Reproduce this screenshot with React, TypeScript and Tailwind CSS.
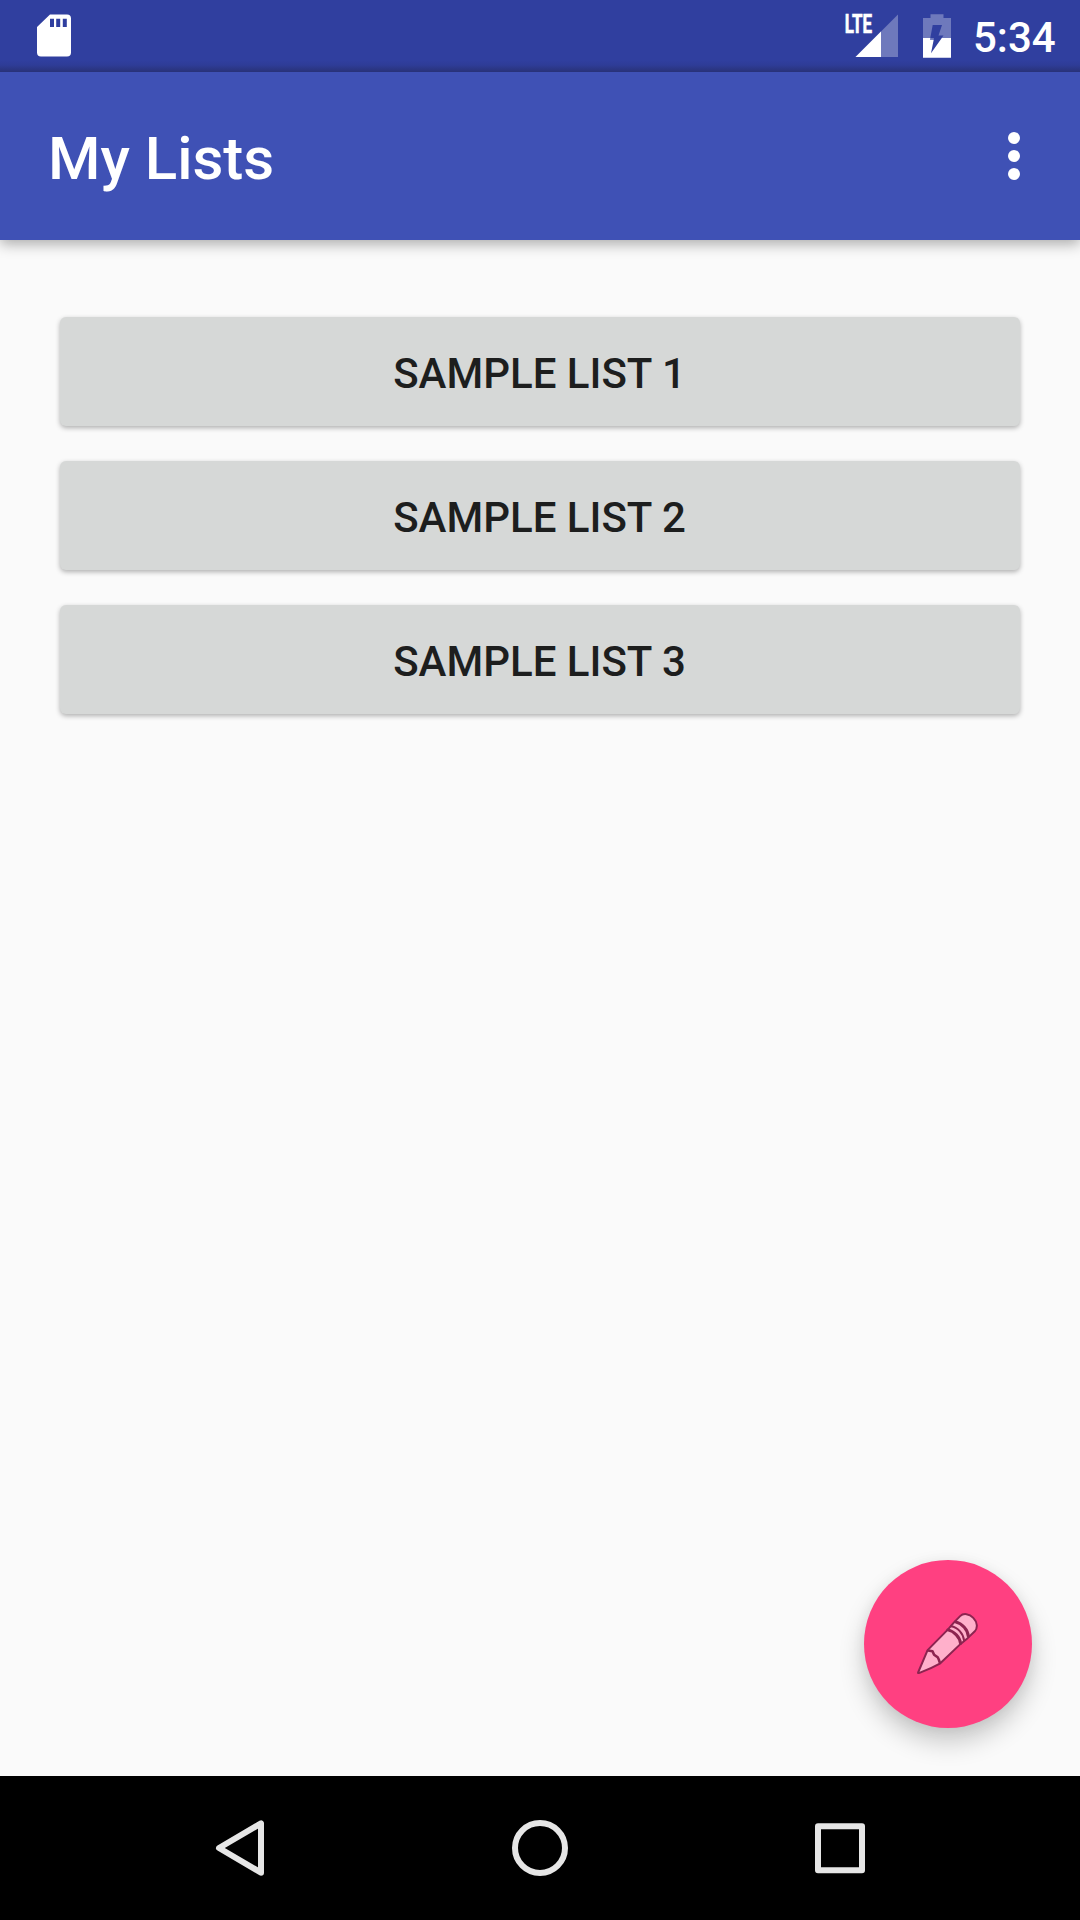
const LISTS = ["Sample List 1", "Sample List 2", "Sample List 3"];

function SdCardIcon() {
  return (
    <svg width="34" height="43" viewBox="0 0 34 43" className="shrink-0">
      <path
        fill="#fff"
        fillRule="evenodd"
        d="M13 .5H30a4 4 0 0 1 4 4V38.5a4 4 0 0 1-4 4H4a4 4 0 0 1-4-4V13ZM13 4.7V13h4V4.7ZM19.2 4.7V13h4V4.7ZM25.8 4.7V13h4V4.7Z"
      />
    </svg>
  );
}

function SignalIcon() {
  return (
    <svg width="61" height="52" viewBox="838 6 61 52" className="-mt-2 shrink-0">
      <path d="M898 14.5V57H855.5Z" fill="#fff" fillOpacity=".3" />
      <path d="M881 31.5V57H855.5Z" fill="#fff" />
      <text
        x="844.7"
        y="33.4"
        fill="#fff"
        stroke="#fff"
        strokeWidth=".6"
        fontFamily="Roboto"
        fontWeight="700"
        fontSize="25.5"
        textLength="27.4"
        lengthAdjust="spacingAndGlyphs"
      >
        LTE
      </text>
    </svg>
  );
}

function BatteryIcon() {
  return (
    <svg width="28" height="44" viewBox="923 14 28 44" className="shrink-0">
      <path
        fill="#fff"
        fillOpacity=".3"
        fillRule="evenodd"
        d="M930.5 14.2H943.5V18H951V38H941.6L943.5 35.6H938.5L942 25H932.7L930 39.6H933.6L934 38H923V18H930.5Z"
      />
      <path
        fill="#fff"
        d="M923 38H930.3L930 39.8H933.7L931 53.3L941.8 38H951V57.8H923Z"
      />
    </svg>
  );
}

function PencilIcon() {
  return (
    <svg width="62" height="62" viewBox="917.7 1612.7 62 62">
      <g fill="#ffb0cb" stroke="#8c2450" strokeWidth="2" strokeLinejoin="round" strokeLinecap="round">
        <path d="M918.8 1672.2L928.3 1649.8L948.5 1629.3L954.5 1622.3L960.8 1615.8C964 1612.6 970 1613.2 974 1617.6C978.2 1622 978.6 1627.6 975.5 1631L968.6 1637.6L961.3 1643.6L941 1663Q932 1668 920.2 1672.6Q918.4 1673.2 918.8 1672.2Z" />
        <path fill="none" strokeWidth="2.6" d="M928.8 1650.2L933.2 1651L934.8 1654.4L938.4 1657L939.6 1659.5L940.6 1662.5" />
        <path fill="none" strokeWidth="3" d="M948.5 1629.6C955 1631 960.6 1637 961.2 1643" />
        <path fill="none" strokeWidth="2" d="M951.6 1626C958.5 1627 964 1633 964.8 1640.4" />
        <path fill="none" strokeWidth="3" d="M956 1621.6C963 1623 968.6 1629.4 969 1636" />
      </g>
    </svg>
  );
}

function StatusBar() {
  return (
    <div className="flex h-[72px] items-start bg-[#303f9f] bg-[linear-gradient(to_bottom,transparent_60px,rgba(30,30,60,0.08)_65px,rgba(30,30,60,0.4)_72px)] pt-3.5 pr-6 pl-[37px]">
      <SdCardIcon />
      <div className="ml-auto flex items-start">
        <SignalIcon />
        <div className="ml-6">
          <BatteryIcon />
        </div>
        <span className="ml-[22px] w-[83px] pt-px text-[42px] leading-[46px] font-medium whitespace-nowrap text-white">
          5:34
        </span>
      </div>
    </div>
  );
}

function AppBar() {
  return (
    <header className="relative flex h-[168px] items-center justify-between bg-[#3f51b5] pr-[60px] pl-12 shadow-[0_4px_13px_rgba(0,0,0,0.32)] [clip-path:inset(0_0_-24px_0)]">
      <h1 className="pt-1.5 text-[60px] leading-[70px] font-medium text-white">My Lists</h1>
      <button aria-label="More options" className="flex flex-col gap-1.5">
        <span className="size-3 rounded-full bg-white" />
        <span className="size-3 rounded-full bg-white" />
        <span className="size-3 rounded-full bg-white" />
      </button>
    </header>
  );
}

function NavigationBar() {
  return (
    <nav className="flex h-36 items-center justify-between bg-black px-[210px]">
      <svg width="60" height="60" viewBox="210 1818 60 60" fill="none" stroke="#e6e6e6" strokeWidth="6" strokeLinejoin="round">
        <path d="M261 1823.3V1872.7L219 1848Z" />
      </svg>
      <svg width="60" height="60" viewBox="0 0 60 60" fill="none" stroke="#e6e6e6" strokeWidth="6">
        <circle cx="30" cy="30" r="25" />
      </svg>
      <svg width="60" height="60" viewBox="0 0 60 60" fill="none" stroke="#e6e6e6" strokeWidth="6">
        <path strokeLinejoin="round" d="M8 8.2H52V52.2H8Z" />
      </svg>
    </nav>
  );
}

export default function App() {
  return (
    <div className="flex h-[1920px] w-[1080px] flex-col overflow-hidden bg-[#fafafa] font-[Roboto,sans-serif]">
      <StatusBar />
      <AppBar />
      <main className="flex flex-1 flex-col px-[60px] pt-[77px]">
        <div className="flex flex-col gap-[35px]">
          {LISTS.map((name) => (
            <button
              key={name}
              className="h-[109px] rounded-md bg-[#d6d8d7] pt-[5px] pr-px text-[42px] leading-[50px] font-medium text-[#1d1e1e] uppercase shadow-[0_2px_5px_rgba(0,0,0,0.3)]"
            >
              {name}
            </button>
          ))}
        </div>
        <button
          aria-label="Edit lists"
          className="mt-auto -mr-3 mb-12 flex size-[168px] items-center justify-center self-end rounded-full bg-[#ff4081] shadow-[0_14px_26px_rgba(0,0,0,0.2),0_2px_14px_rgba(0,0,0,0.06)]"
        >
          <PencilIcon />
        </button>
      </main>
      <NavigationBar />
    </div>
  );
}
